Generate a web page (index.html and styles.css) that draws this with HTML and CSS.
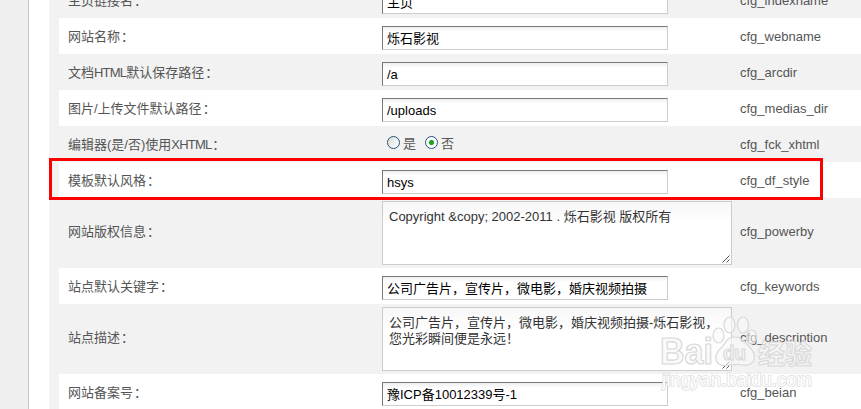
FILE: index.html
```html
<!DOCTYPE html>
<html lang="zh-CN">
<head>
<meta charset="utf-8">
<title>系统基本参数</title>
<link rel="stylesheet" href="styles.css">
</head>
<body>
<div class="page">
  <aside class="side"></aside>
  <main class="settings">
    <div class="row first"><div class="label">主页链接名<span class="colon">：</span></div><div class="field"><input class="text cjk" value="主页"></div><div class="name">cfg_indexname</div></div>
    <div class="row white"><div class="label">网站名称<span class="colon">：</span></div><div class="field"><input class="text cjk" value="烁石影视"></div><div class="name">cfg_webname</div></div>
    <div class="row"><div class="label">文档<span class="latin">HTML</span>默认保存路径<span class="colon">：</span></div><div class="field"><input class="text" value="/a"></div><div class="name">cfg_arcdir</div></div>
    <div class="row white"><div class="label">图片/上传文件默认路径<span class="colon">：</span></div><div class="field"><input class="text" value="/uploads"></div><div class="name">cfg_medias_dir</div></div>
    <div class="row"><div class="label">编辑器(是/否)使用<span class="latin">XHTML</span><span class="colon">：</span></div><div class="field radios"><i class="radio"></i><span class="option">是</span><i class="radio on"></i><span class="option">否</span></div><div class="name">cfg_fck_xhtml</div></div>
    <div class="row white"><div class="label">模板默认风格<span class="colon">：</span></div><div class="field"><input class="text" value="hsys"></div><div class="name">cfg_df_style</div><div class="highlight"></div></div>
    <div class="row tall"><div class="label">网站版权信息<span class="colon">：</span></div><div class="field"><div class="area">Copyright &amp;copy; 2002-2011 . 烁石影视 版权所有<svg class="grip" width="8" height="8" viewBox="0 0 8 8"><path d="M.5 7.5l7-7M4.5 7.5l3-3"/></svg></div></div><div class="name">cfg_powerby</div></div>
    <div class="row white"><div class="label">站点默认关键字<span class="colon">：</span></div><div class="field"><input class="text cjk" value="公司广告片，宣传片，微电影，婚庆视频拍摄"></div><div class="name">cfg_keywords</div></div>
    <div class="row tall"><div class="label">站点描述<span class="colon">：</span></div><div class="field"><div class="area">公司广告片，宣传片，微电影，婚庆视频拍摄-烁石影视<span>，</span><br>您光彩瞬间便是永远！<svg class="grip" width="8" height="8" viewBox="0 0 8 8"><path d="M.5 7.5l7-7M4.5 7.5l3-3"/></svg></div></div><div class="name">cfg_description</div></div>
    <div class="row white"><div class="label">网站备案号<span class="colon">：</span></div><div class="field"><input class="text cjk" value="豫ICP备10012339号-1"></div><div class="name">cfg_beian</div></div>
  </main>
  <svg class="watermark" width="170" height="90" viewBox="655 310 170 90">
    <g class="mark">
      <ellipse cx="718.500" cy="335.500" rx="5.500" ry="7.500"/>
      <ellipse cx="729.500" cy="325" rx="5.500" ry="8"/>
      <ellipse cx="743" cy="325" rx="5.500" ry="8"/>
      <ellipse cx="751.500" cy="337" rx="5" ry="7"/>
      <path d="M734 337C727 337 726 343 721 348C714 354 713 365 725 365.500C732 365.500 735 364 740 364.500C749 367 756 363 754 354C752 348 748 346 743 340C741 338 738 337 734 337Z"/>
      <text class="brand" x="660" y="364" textLength="53" lengthAdjust="spacingAndGlyphs">Bai</text>
      <text class="du" x="723" y="360" textLength="23" lengthAdjust="spacingAndGlyphs">du</text>
      <text class="jingyan" x="758" y="363.500" textLength="54">经验</text>
      <text class="url" x="662" y="386" textLength="150">jingyan.baidu.com</text>
    </g>
  </svg>
</div>
</body>
</html>
```
FILE: styles.css
```css
* { box-sizing: border-box; }
body {
  margin: 0;
  background: #fff;
  font: 13px/16px "Liberation Sans", "Noto Sans CJK SC", sans-serif;
  color: #555;
}
.page { position: relative; display: flex; width: 861px; height: 409px; overflow: hidden; }
.side { flex: none; width: 29px; background: #efefef; border-right: 1px solid #c8c8c8; }
.settings {
  display: flex;
  flex-direction: column;
  flex: 1;
  height: 409px;
  margin-left: 20px;
  padding-left: 10px;
  background: #f2f2f2;
}
.row {
  position: relative;
  flex: none;
  display: grid;
  grid-template-columns: 313px 358px 1fr;
  align-items: center;
  height: 36px;
  padding-left: 10px;
}
.first { margin-top: -18px; }
.white { background: #fff; }
.tall { height: 70px; }
.label, .name { white-space: nowrap; padding-top: 1px; }
.label { margin-left: -1px; }
.colon { margin-left: 1px; }
.latin { letter-spacing: -.8px; }
.tall .label, .tall .name { padding-bottom: 4px; }
.field { display: flex; align-items: center; }
.text {
  display: block;
  width: 286px;
  height: 24px;
  margin-top: 4px;
  padding: 1px 4px 0;
  border: 1px solid #ccc;
  border-top-color: #777;
  border-left-color: #777;
  border-radius: 0;
  background: linear-gradient(#eee, #fff 5px);
  font: inherit;
  color: #000;
  outline: 0;
}
.cjk { padding: 0 4px 1px; }
.area {
  position: relative;
  width: 350px;
  height: 64px;
  padding: 7px 6px;
  border: 1px solid #ccc;
  background: linear-gradient(#f7f7f7, #fff 22px);
  color: #333;
  white-space: nowrap;
}
.grip { position: absolute; right: 1px; bottom: 1px; fill: none; stroke: #555; stroke-width: 1; }
.radios { padding-left: 5px; }
.radio {
  width: 13px;
  height: 13px;
  margin-top: -3px;
  border: 1px solid #28527c;
  border-radius: 50%;
  background: linear-gradient(135deg, #dcdcd7, #fff);
}
.radio.on { background: radial-gradient(circle, #21a121 0 2px, #fff 3.2px); }
.option { margin: 0 9px 0 3px; }
.highlight {
  position: absolute;
  left: -10px;
  top: -4px;
  width: 774px;
  height: 42px;
  border: 3px solid #f00;
  z-index: 2;
}
.watermark { position: absolute; left: 655px; top: 310px; }
.mark { fill: rgba(248,248,248,.6); stroke: #d8d8d8; stroke-width: 1.2; stroke-linejoin: round; }
.brand { font: bold 36px "Liberation Sans", sans-serif; }
.du { font: bold 21px "Liberation Sans", sans-serif; }
.jingyan { font: bold 27px "Noto Sans CJK SC", sans-serif; stroke-width: 1; }
.url { font: 18.5px "Liberation Sans", sans-serif; fill: #fff; stroke: #dedede; stroke-width: 1.6; paint-order: stroke; }
```
